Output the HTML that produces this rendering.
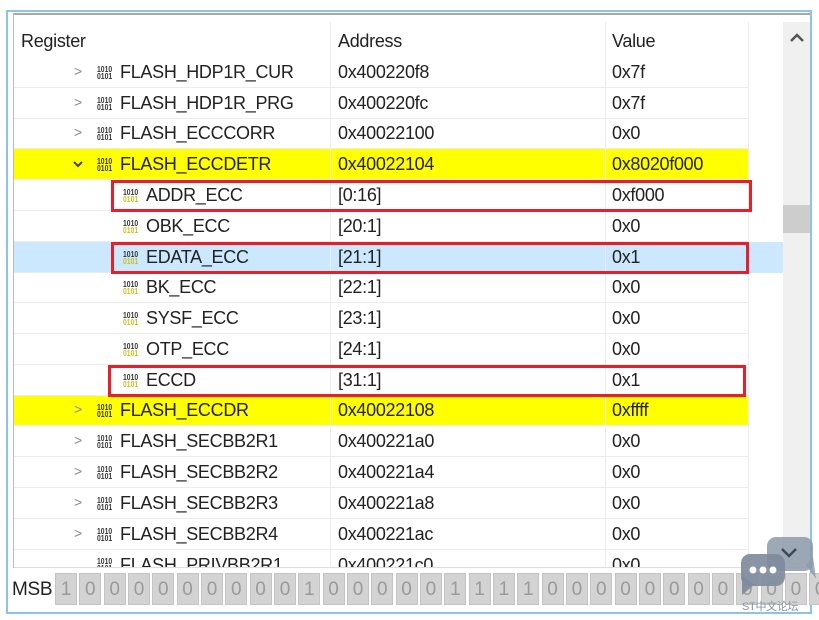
<!DOCTYPE html>
<html><head><meta charset="utf-8"><style>
*{margin:0;padding:0;box-sizing:border-box}
body{width:819px;height:620px;background:#fff;position:relative;overflow:hidden;font-family:"Liberation Sans",sans-serif;color:#222;}
.abs{position:absolute}
.t{position:absolute;font-size:18px;line-height:20px;white-space:nowrap;letter-spacing:-0.3px}
.row{position:absolute;left:14px;height:31px;border-bottom:1px solid #ececec;width:734px}
.vl{position:absolute;width:1px;background:#ececec}
.ic{position:absolute;font-size:8px;line-height:7px;font-weight:bold;font-family:"Liberation Sans",sans-serif;color:#333;letter-spacing:0px;transform:scaleX(0.85);transform-origin:left top}
.ic.f span{color:#c9c020}
.chev{position:absolute;font-size:14px;color:#888}
.red{position:absolute;border:3px solid #e5202a}
.bit{position:absolute;top:573px;width:22px;height:32px;background:#d3d3d3;border:1px solid #c4c4c4;color:#9a9a9a;font-size:19px;text-align:center;line-height:32px}
</style></head><body>
<div class="abs" style="left:6px;top:10px;width:806px;height:604px;border:2px solid #8cc3e6;"></div>
<div class="abs" style="left:13px;top:13px;width:797px;height:3px;border-top:2px solid #a9a9a9;"></div>
<div class="abs" style="left:13px;top:13px;width:1px;height:555px;background:#bbb"></div>
<div class="abs" style="left:783px;top:22px;width:27px;height:545px;background:#f0f0f0"></div>
<div class="abs" style="left:783px;top:205px;width:27px;height:28px;background:#cdcdcd"></div>
<svg class="abs" style="left:789px;top:32px" width="16" height="12"><path d="M2 9 L8 3 L14 9" fill="none" stroke="#555" stroke-width="2.5"/></svg>

<div class="t" style="left:21px;top:31px">Register</div>
<div class="t" style="left:338px;top:31px">Address</div>
<div class="t" style="left:612px;top:31px">Value</div>

<div class="abs" style="left:14px;top:149px;width:734px;height:31px;background:#ffff00"></div>
<div class="abs" style="left:14px;top:242px;width:769px;height:31px;background:#cce8ff"></div>
<div class="abs" style="left:14px;top:395px;width:734px;height:31px;background:#ffff00"></div>

<div class="vl" style="left:330px;top:22px;height:545px"></div>
<div class="vl" style="left:605px;top:22px;height:545px"></div>
<div class="vl" style="left:748px;top:22px;height:545px"></div>

<div class="row" style="top:57px"></div><div class="row" style="top:88px"></div><div class="row" style="top:118px"></div><div class="row" style="top:149px"></div><div class="row" style="top:180px"></div><div class="row" style="top:211px"></div><div class="row" style="top:242px"></div><div class="row" style="top:272px"></div><div class="row" style="top:303px"></div><div class="row" style="top:334px"></div><div class="row" style="top:365px"></div><div class="row" style="top:395px"></div><div class="row" style="top:426px"></div><div class="row" style="top:457px"></div><div class="row" style="top:488px"></div><div class="row" style="top:519px"></div>

<div class="chev" style="left:74px;top:63px">&gt;</div><div class="ic" style="left:97px;top:66px">1010<br>0101</div><div class="t" style="left:120px;top:62px">FLASH_HDP1R_CUR</div><div class="t" style="left:338px;top:62px">0x400220f8</div><div class="t" style="left:612px;top:62px">0x7f</div>
<div class="chev" style="left:74px;top:94px">&gt;</div><div class="ic" style="left:97px;top:97px">1010<br>0101</div><div class="t" style="left:120px;top:93px">FLASH_HDP1R_PRG</div><div class="t" style="left:338px;top:93px">0x400220fc</div><div class="t" style="left:612px;top:93px">0x7f</div>
<div class="chev" style="left:74px;top:124px">&gt;</div><div class="ic" style="left:97px;top:127px">1010<br>0101</div><div class="t" style="left:120px;top:123px">FLASH_ECCCORR</div><div class="t" style="left:338px;top:123px">0x40022100</div><div class="t" style="left:612px;top:123px">0x0</div>
<svg class="abs" style="left:72px;top:159px" width="12" height="10"><path d="M2 3 L6 7 L10 3" fill="none" stroke="#444" stroke-width="2"/></svg><div class="ic" style="left:97px;top:158px">1010<br>0101</div><div class="t" style="left:120px;top:154px">FLASH_ECCDETR</div><div class="t" style="left:338px;top:154px">0x40022104</div><div class="t" style="left:612px;top:154px">0x8020f000</div>

<div class="ic f" style="left:123px;top:189px">1010<br><span>0101</span></div><div class="t" style="left:146px;top:185px">ADDR_ECC</div><div class="t" style="left:338px;top:185px">[0:16]</div><div class="t" style="left:612px;top:185px">0xf000</div>
<div class="ic f" style="left:123px;top:220px">1010<br><span>0101</span></div><div class="t" style="left:146px;top:216px">OBK_ECC</div><div class="t" style="left:338px;top:216px">[20:1]</div><div class="t" style="left:612px;top:216px">0x0</div>
<div class="ic f" style="left:123px;top:251px">1010<br><span>0101</span></div><div class="t" style="left:146px;top:247px">EDATA_ECC</div><div class="t" style="left:338px;top:247px">[21:1]</div><div class="t" style="left:612px;top:247px">0x1</div>
<div class="ic f" style="left:123px;top:281px">1010<br><span>0101</span></div><div class="t" style="left:146px;top:277px">BK_ECC</div><div class="t" style="left:338px;top:277px">[22:1]</div><div class="t" style="left:612px;top:277px">0x0</div>
<div class="ic f" style="left:123px;top:312px">1010<br><span>0101</span></div><div class="t" style="left:146px;top:308px">SYSF_ECC</div><div class="t" style="left:338px;top:308px">[23:1]</div><div class="t" style="left:612px;top:308px">0x0</div>
<div class="ic f" style="left:123px;top:343px">1010<br><span>0101</span></div><div class="t" style="left:146px;top:339px">OTP_ECC</div><div class="t" style="left:338px;top:339px">[24:1]</div><div class="t" style="left:612px;top:339px">0x0</div>
<div class="ic f" style="left:123px;top:374px">1010<br><span>0101</span></div><div class="t" style="left:146px;top:370px">ECCD</div><div class="t" style="left:338px;top:370px">[31:1]</div><div class="t" style="left:612px;top:370px">0x1</div>

<div class="chev" style="left:74px;top:401px">&gt;</div><div class="ic" style="left:97px;top:404px">1010<br>0101</div><div class="t" style="left:120px;top:400px">FLASH_ECCDR</div><div class="t" style="left:338px;top:400px">0x40022108</div><div class="t" style="left:612px;top:400px">0xffff</div>
<div class="chev" style="left:74px;top:432px">&gt;</div><div class="ic" style="left:97px;top:435px">1010<br>0101</div><div class="t" style="left:120px;top:431px">FLASH_SECBB2R1</div><div class="t" style="left:338px;top:431px">0x400221a0</div><div class="t" style="left:612px;top:431px">0x0</div>
<div class="chev" style="left:74px;top:463px">&gt;</div><div class="ic" style="left:97px;top:466px">1010<br>0101</div><div class="t" style="left:120px;top:462px">FLASH_SECBB2R2</div><div class="t" style="left:338px;top:462px">0x400221a4</div><div class="t" style="left:612px;top:462px">0x0</div>
<div class="chev" style="left:74px;top:494px">&gt;</div><div class="ic" style="left:97px;top:497px">1010<br>0101</div><div class="t" style="left:120px;top:493px">FLASH_SECBB2R3</div><div class="t" style="left:338px;top:493px">0x400221a8</div><div class="t" style="left:612px;top:493px">0x0</div>
<div class="chev" style="left:74px;top:525px">&gt;</div><div class="ic" style="left:97px;top:528px">1010<br>0101</div><div class="t" style="left:120px;top:524px">FLASH_SECBB2R4</div><div class="t" style="left:338px;top:524px">0x400221ac</div><div class="t" style="left:612px;top:524px">0x0</div>
<div class="abs" style="left:14px;top:550px;width:769px;height:17px;overflow:hidden">
<div class="ic" style="left:83px;top:8px">1010<br>0101</div><div class="t" style="left:106px;top:5px">FLASH_PRIVBB2R1</div><div class="t" style="left:324px;top:5px">0x400221c0</div><div class="t" style="left:598px;top:5px">0x0</div>
</div>
<div class="abs" style="left:14px;top:567px;width:796px;height:1px;background:#ddd"></div>

<div class="red" style="left:111px;top:180px;width:641px;height:32px"></div>
<div class="red" style="left:111px;top:242px;width:638px;height:32px"></div>
<div class="red" style="left:108px;top:365px;width:638px;height:32px"></div>

<div class="t" style="left:12px;top:580px;font-size:19px">MSB</div>
<div id="bits"></div>
<script>
var s="10000000001000001111000000000000",h="";
for(var i=0;i<32;i++){h+='<div class="bit" style="left:'+(55+i*24.33).toFixed(1)+'px">'+s[i]+'</div>';}
document.getElementById('bits').innerHTML=h;
</script>
<svg class="abs" style="left:738px;top:535px" width="81" height="70">
<rect x="29" y="2" width="46" height="34" rx="9" fill="#8d9aab" opacity="0.85"/>
<path d="M68 30 L78 44 L75 22 z" fill="#8d9aab" opacity="0.85"/>
<path d="M44 14 L51 21 L58 14" fill="none" stroke="#3f4752" stroke-width="2.5"/>
<rect x="3" y="19" width="44" height="32" rx="9" fill="#7f8b9c" opacity="0.92"/>
<path d="M4 40 v20 l12 -10 z" fill="#7f8b9c" opacity="0.92"/>
<circle cx="15" cy="35" r="3.5" fill="#fff"/><circle cx="25" cy="35" r="3.5" fill="#fff"/><circle cx="35" cy="35" r="3.5" fill="#fff"/>
</svg>
<div class="t" style="left:742px;top:597px;font-size:11px;color:#8795a6;font-family:'Liberation Sans','Noto Sans CJK SC',sans-serif">ST中文论坛</div>
</body></html>
